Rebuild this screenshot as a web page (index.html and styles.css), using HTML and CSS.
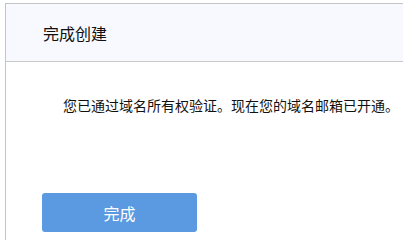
FILE: index.html
```html
<!DOCTYPE html>
<html>
<head>
  <meta charset="utf-8">
  <title>完成创建</title>
  <link rel="stylesheet" href="styles.css">
</head>
<body>
  <div class="panel">
    <div class="panel-head">完成创建</div>
    <div class="panel-body">
      <p class="message">您已通过域名所有权验证。现在您的域名邮箱已开通。</p>
      <button class="btn-done">完成</button>
    </div>
  </div>
</body>
</html>
```

FILE: styles.css
```css
body {
  margin: 0;
  background-color: #fff;
  font-family: "Noto Sans CJK SC", "Noto Sans", sans-serif;
  color: #111;
}
.panel {
  margin: 3px 0 0 5px;
  border-top: 1px solid #c4c4c4;
  border-left: 1px solid #c4c4c4;
  height: 240px;
}
.panel-head {
  height: 57px;
  display: flex;
  align-items: center;
  padding-left: 37px;
  font-size: 16px;
  background-color: #f8f9fe;
  border-bottom: 1px solid #c8c8c8;
}
.panel-body {
  padding-top: 33px;
}
.message {
  margin: 0;
  padding-left: 57px;
  font-size: 14px;
  line-height: 20px;
  white-space: nowrap;
}
.btn-done {
  display: block;
  margin: 78px 0 0 36px;
  width: 155px;
  height: 39px;
  border: none;
  border-radius: 3px;
  background-color: #5b9ae0;
  color: #fff;
  font-family: inherit;
  font-size: 16px;
}
```
